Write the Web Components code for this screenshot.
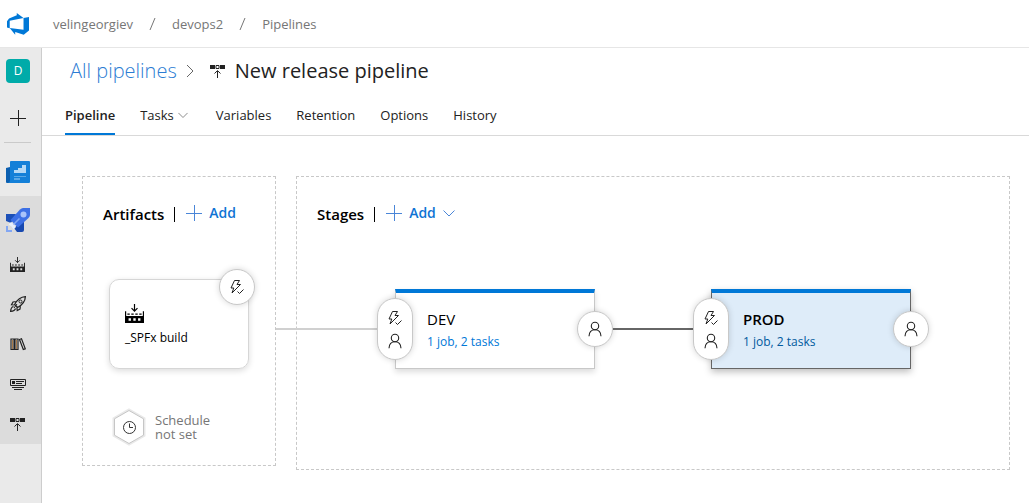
<!DOCTYPE html>
<html lang="en">
<head>
<meta charset="utf-8">
<title>New release pipeline - Pipelines</title>
<style>
  body { margin: 0; font: 13px/18px "Open Sans", "Noto Sans", sans-serif; color: #222; background: #fff; }
</style>
</head>
<body>
<release-app></release-app>
<script>
const ICONS = {
  logo: [24, 24, '<path fill="#0078d7" d="M0 8.899l2.247-2.966 8.405-3.416V.045l7.370 5.393L2.966 8.360v8.224L0 15.732zM24 4.450v14.652l-5.753 4.719-9.303-3.056v3.056l-5.978-7.416 15.057 1.798V5.438z"/>'],
  plus: [16, 16, '<path stroke="currentColor" d="M0 8.500h16M8.500 0v16"/>'],
  down: [12, 12, '<path stroke="currentColor" fill="none" d="M.5 3.500L6 9l5.500-5.500"/>'],
  right: [8, 14, '<path stroke="currentColor" fill="none" d="M1 1l6 6-6 6"/>'],
  slash: [7, 16, '<path stroke="currentColor" fill="none" d="M6 2L1 14"/>'],
  boards: [24, 24, '<path fill="#0b5fb0" d="M0 8l4-1v16H1a1 1 0 0 1-1-1z"/><path fill="#1480d8" d="M5 1h18a1 1 0 0 1 1 1v20a1 1 0 0 1-1 1H1q3 0 3-3V2a1 1 0 0 1 1-1z"/><path fill="#b5d9f5" d="M8 13v-3h4V8h4V5h4v8z"/><path fill="#5ba9e7" d="M8 16h12v1H8zM8 18h6v2H8z"/>'],
  rocketColor: [24, 24, '<path fill="#1c50b8" d="M0 6h10l-5 9-5-2z"/><path fill="#1849b0" d="M18 12v10q0 2-2 2h-5l-3-4z"/><path fill="#3d70e5" d="M14 1.500Q15.500 0 17 0h7v7q0 1.500-1.500 3L12 19.500 4.500 12z"/><circle cx="17.500" cy="6.500" r="3" fill="#a9c3fa"/><path stroke="#83a7f3" stroke-width="1.600" d="M7 17l6.500-6.500"/><path fill="#e8effc" d="M2.500 16.500L5 14l5 5-2.500 2.500-2-3z"/><path fill="#83a7f3" d="M0 18h2v4h4v2H0z"/>'],
  build: [16, 16, '<path fill="currentColor" d="M0 6h1v4h14V6h1v10H0zM2 8h2v1H2zm3.300 0h2v1h-2zm3.400 0h2v1h-2zM12 8h2v1h-2zM3 12v2h2v-2zm4 0v2h2v-2zm4 0v2h2v-2z" fill-rule="evenodd"/><path stroke="currentColor" fill="none" d="M8 0v6M5.500 3.500L8 6l2.500-2.500"/>'],
  rocket: [16, 16, '<path fill="none" stroke="currentColor" stroke-width="1.200" d="M15.400.6C11 .8 7 4 4.600 8.500l3 3C12 9 15.200 5 15.400.6zM6.500 5.500L3 6 1.500 8.800l3 .2M10.500 9.500L10 13l-2.800 1.500-.3-3M3.500 10.500C1.500 11 .8 12.500.6 15.400c2.900-.2 4.400-.9 4.900-2.900"/><circle cx="10.500" cy="5.500" r="1.500" fill="none" stroke="currentColor"/><path stroke="currentColor" d="M4 12l3-4"/>'],
  library: [16, 16, '<path fill="none" stroke="currentColor" stroke-width="1.200" d="M1 3h3v10.500H1zM5 3h3v10.500H5zM9.500 3.500l2-.7 3.800 10-2 .7z"/><path stroke="#a77b4b" stroke-width="1" d="M2.500 4v9M6.500 4v9"/>'],
  tasks: [16, 16, '<path fill="none" stroke="currentColor" d="M.5 3.500h15v6H.5zM6 5.500h8M6 7.500h6M2 11.500h12M4 13.500h8"/><path fill="currentColor" d="M2 5h3v3H2z"/>'],
  deploy: [16, 16, '<path fill="currentColor" d="M0 2h5v4H0zM10 2h5v4h-5z"/><path fill="none" stroke="currentColor" d="M6 2.500h3v3H6zM7.500 15V8M4.500 10.500l3-2.900 3 2.900"/>'],
  trigger: [16, 16, '<path fill="none" stroke="currentColor" d="M5.500 1.500h5L8 5.500h3.500L3 14l1.800-5H2zM8.500 12.500l2 2 4-4"/>'],
  person: [16, 16, '<circle cx="8" cy="5" r="3.700" fill="none" stroke="currentColor" stroke-width="1.100"/><path fill="none" stroke="currentColor" stroke-width="1.100" d="M2 15.200c.2-4 2.500-6.500 6-6.500s5.800 2.500 6 6.500"/>'],
  hexClock: [34, 38, '<path fill="#fff" stroke="#e9e9e9" stroke-width="3" d="M17 2l15 8.500v17L17 36 2 27.500v-17z"/><path fill="#fff" stroke="#c6c6c6" d="M17 2.500l14.500 8.300v16.400L17 35.500 2.500 27.200V10.800z"/><circle cx="17.500" cy="19.500" r="6" fill="none" stroke="#333"/><path fill="none" stroke="#333" d="M17.500 15.500v4H21"/>']
};

function define(name, html, setup) {
  const template = document.createElement('template');
  template.innerHTML = html;
  customElements.define(name, class extends HTMLElement {
    connectedCallback() {
      if (this.shadowRoot) return;
      const root = this.attachShadow({ mode: 'open' });
      root.append(template.content.cloneNode(true));
      if (setup) setup(this, root);
    }
  });
}

define('ui-icon', '<style>:host{display:block;flex:none}svg{display:block}</style>', (el, root) => {
  const [w, h, body] = ICONS[el.getAttribute('name')];
  const scale = (Number(el.getAttribute('size')) || w) / w;
  root.innerHTML += `<svg width="${w * scale}" height="${h * scale}" viewBox="0 0 ${w} ${h}" fill="none" aria-hidden="true">${body}</svg>`;
});

define('org-header', `
<style>
  :host { display: flex; align-items: center; height: 47px; padding-left: 7px; border-bottom: 1px solid #e6e6e6; color: #767676; }
  nav { display: flex; align-items: center; gap: 16px; padding-left: 24px; }
  a { color: inherit; text-decoration: none; }
  .home { color: #0078d7; }
</style>
<a class="home" href="#" aria-label="Azure DevOps"><ui-icon name="logo" size="22"></ui-icon></a>
<nav aria-label="Breadcrumb">
  <a href="#">velingeorgiev</a><ui-icon name="slash"></ui-icon>
  <a href="#">devops2</a><ui-icon name="slash"></ui-icon>
  <a href="#">Pipelines</a>
</nav>`);

define('side-rail', `
<style>
  :host { display: block; flex: none; width: 41px; background: #eaeaea; border-right: 1px solid #cdcdcd; }
  a, button { display: flex; align-items: center; justify-content: center; width: 36px; height: 48px; padding: 0; border: 0; background: none; color: #222; font: inherit; text-decoration: none; }
  .project { height: 46px; }
  .tile { display: grid; place-items: center; width: 24px; height: 24px; border-radius: 4px; background: #00aba9; color: #fff; font-size: 12px; }
  hr { width: 27px; height: 1px; margin: 0 4px; border: 0; background: #cacaca; }
  .boards { height: 53px; padding-top: 4px; box-sizing: border-box; }
  .group { background: #dcdcdc; }
  .small { width: 35px; height: 40px; }
</style>
<a class="project" href="#" aria-label="Project devops2"><span class="tile">D</span></a>
<button aria-label="Create new"><ui-icon name="plus"></ui-icon></button>
<hr>
<a class="boards" href="#" aria-label="Boards"><ui-icon name="boards"></ui-icon></a>
<div class="group">
  <a href="#" aria-label="Pipelines"><ui-icon name="rocketColor"></ui-icon></a>
  <a class="small" href="#" aria-label="Builds"><ui-icon name="build" size="15"></ui-icon></a>
  <a class="small" href="#" aria-label="Releases"><ui-icon name="rocket"></ui-icon></a>
  <a class="small" href="#" aria-label="Library"><ui-icon name="library"></ui-icon></a>
  <a class="small" href="#" aria-label="Task groups"><ui-icon name="tasks"></ui-icon></a>
  <a class="small" href="#" aria-label="Deployment groups"><ui-icon name="deploy"></ui-icon></a>
</div>`);

define('page-title', `
<style>
  :host { display: flex; align-items: center; height: 46px; padding-left: 28px; font-size: 20px; line-height: 28px; }
  a { color: #2b7cd3; font-weight: 300; text-decoration: none; }
  .sep { margin: 0 16px 0 9px; color: #666; }
  h1 { margin: 0 0 0 9px; font: inherit; }
</style>
<a href="#">All pipelines</a><ui-icon class="sep" name="right"></ui-icon>
<ui-icon name="deploy"></ui-icon><h1><slot></slot></h1>`);

define('tab-item', `
<style>
  :host { display: block; }
  :host([menu]) { margin-right: 3px; }
  button { display: flex; align-items: center; gap: 4px; height: 41px; padding: 2px 0 0; border: 0; border-bottom: 2px solid transparent; background: none; font: inherit; color: #222; }
  :host([selected]) button { font-weight: 600; border-color: #0078d7; }
  ui-icon { color: #777; }
</style>
<button role="tab"><slot></slot></button>`, (el, root) => {
  const button = root.querySelector('button');
  button.setAttribute('aria-selected', el.hasAttribute('selected'));
  if (el.hasAttribute('menu')) button.insertAdjacentHTML('beforeend', '<ui-icon name="down" size="10"></ui-icon>');
});

define('tab-bar', `
<style>:host{display:flex;gap:25px;padding-left:23px;border-bottom:1px solid #d9d9d9}</style><slot></slot>`);

define('flow-panel', `
<style>
  :host { display: block; box-sizing: border-box; border: 1px dashed #c8c8c8; padding: 22px 20px 19px; }
  header { display: flex; align-items: center; height: 30px; }
  h2 { margin: 0 10px 0 0; font-size: 15px; line-height: 20px; font-weight: 600; color: #000; }
  .bar { width: 1px; height: 15px; margin-right: 11px; background: #000; }
  button { display: flex; align-items: center; gap: 7px; margin: 0 0 2px; padding: 0; border: 0; background: none; font: inherit; font-size: 14px; font-weight: 600; color: #0f74d4; }
  ui-icon { color: #4a86d8; }
</style>
<header><h2></h2><span class="bar"></span><button><ui-icon name="plus"></ui-icon>Add</button></header>
<slot></slot>`, (el, root) => {
  root.querySelector('h2').textContent = el.getAttribute('heading');
  if (el.hasAttribute('menu')) root.querySelector('button').insertAdjacentHTML('beforeend', '<ui-icon name="down"></ui-icon>');
});

define('gate-badge', `
<style>
  :host { display: block; }
  button { display: flex; flex-direction: column; align-items: center; justify-content: center; gap: 7px; box-sizing: border-box; width: 36px; min-height: 36px; padding: 0; border: 1px solid #c8c8c8; border-radius: 18px; background: #fff; color: #222; box-shadow: 0 0 6px rgba(0,0,0,.16); }
  :host([double]) button { min-height: 62px; }
</style>
<button><slot></slot></button>`, (el, root) => {
  root.querySelector('button').setAttribute('aria-label', el.getAttribute('label'));
});

define('artifact-card', `
<style>
  :host { display: block; position: relative; box-sizing: border-box; width: 140px; height: 90px; margin: 50px 0 0 6px; padding: 24px 15px; border: 1px solid #d6d6d6; border-radius: 10px; box-shadow: 0 2px 6px rgba(0,0,0,.14); color: #000; font-size: 12px; }
  p { margin: 6px 0 0; }
  gate-badge { position: absolute; top: -11px; right: -7px; }
</style>
<ui-icon name="build" size="19"></ui-icon><p><slot></slot></p>
<gate-badge label="Continuous deployment trigger"><ui-icon name="trigger"></ui-icon></gate-badge>`);

define('schedule-trigger', `
<style>
  :host { display: flex; align-items: center; gap: 9px; margin: 39px 0 0 9px; line-height: 14px; color: #767676; }
  span { width: 64px; }
</style>
<ui-icon name="hexClock"></ui-icon><span><slot></slot></span>`);

define('stage-card', `
<style>
  :host { display: block; position: relative; flex: none; box-sizing: border-box; width: 200px; height: 80px; padding: 16px 31px; border: 1px solid #c8c8c8; border-top: 4px solid #0078d7; background: #fff; box-shadow: 0 3px 6px rgba(0,0,0,.14); }
  :host([selected]) { background: #deecf9; border-color: #0078d7 #666 #666; box-shadow: 0 3px 7px rgba(0,0,0,.26); }
  h3 { margin: 0; font-size: 15px; line-height: 20px; font-weight: 400; color: #000; }
  :host([selected]) h3 { font-weight: 600; }
  a { display: block; margin-top: 4px; font-size: 12px; line-height: 18px; color: #0078d7; text-decoration: none; }
  :host([selected]) a { color: #005a9e; }
  .link { position: absolute; right: 100%; top: 35px; width: 120px; height: 2px; background: #d0d0d0; }
  :host([selected]) .link { width: 99px; background: #666; }
  .pre, .post { position: absolute; }
  .pre { top: 5px; left: -19px; }
  .post { top: 18px; right: -19px; }
</style>
<span class="link"></span>
<h3></h3><a href="#"><slot></slot></a>
<gate-badge class="pre" double label="Pre-deployment conditions"><ui-icon name="trigger"></ui-icon><ui-icon name="person"></ui-icon></gate-badge>
<gate-badge class="post" label="Post-deployment conditions"><ui-icon name="person"></ui-icon></gate-badge>`, (el, root) => {
  root.querySelector('h3').textContent = el.getAttribute('name');
});

define('release-app', `
<style>
  :host { display: flex; flex-direction: column; min-height: 100vh; }
  .body { display: flex; flex: 1; }
  main { flex: 1; min-width: 0; }
  .canvas { display: flex; align-items: flex-start; gap: 20px; padding: 40px 19px 20px 40px; }
  .artifacts { flex: none; width: 194px; }
  .stages { flex: 1; min-height: 294px; }
  .row { display: flex; gap: 116px; padding: 60px 0 0 78px; }
</style>
<org-header></org-header>
<div class="body">
  <side-rail></side-rail>
  <main>
    <page-title>New release pipeline</page-title>
    <tab-bar role="tablist">
      <tab-item selected>Pipeline</tab-item><tab-item menu>Tasks</tab-item><tab-item>Variables</tab-item>
      <tab-item>Retention</tab-item><tab-item>Options</tab-item><tab-item>History</tab-item>
    </tab-bar>
    <div class="canvas">
      <flow-panel class="artifacts" heading="Artifacts">
        <artifact-card>_SPFx build</artifact-card>
        <schedule-trigger>Schedule not set</schedule-trigger>
      </flow-panel>
      <flow-panel class="stages" heading="Stages" menu>
        <div class="row">
          <stage-card name="DEV">1 job, 2 tasks</stage-card>
          <stage-card name="PROD" selected>1 job, 2 tasks</stage-card>
        </div>
      </flow-panel>
    </div>
  </main>
</div>`);
</script>
</body>
</html>
